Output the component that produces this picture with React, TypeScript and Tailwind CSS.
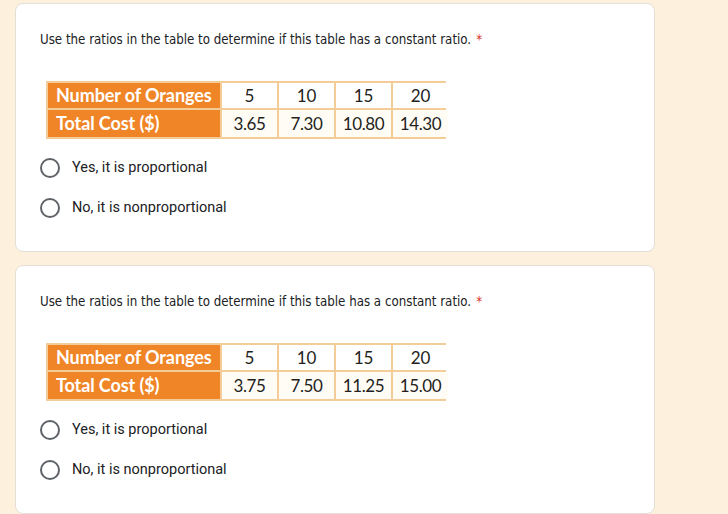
import React from "react";

type Q = { costs: string[] };

const questions: Q[] = [
  { costs: ["3.65", "7.30", "10.80", "14.30"] },
  { costs: ["3.75", "7.50", "11.25", "15.00"] },
];

const nums = ["5", "10", "15", "20"];

function RatioTable({ costs }: { costs: string[] }) {
  return (
    <div
      className="ml-[6px] w-[400px] grid grid-cols-[172px_55px_55px_55px_55px] grid-rows-[25px_27px] gap-[2px] p-[2px] bg-[#f4cc98]"
      style={{ fontFamily: "Lato, 'Open Sans', sans-serif" }}
    >
      <div className="bg-[#f08527] text-white font-bold text-[18px] leading-[25px] pl-[8px] tracking-[-0.1px]">
        Number of Oranges
      </div>
      {nums.map((n) => (
        <div key={n} className="bg-white text-[#231f20] text-[17px] leading-[25px] text-center">
          {n}
        </div>
      ))}
      <div className="bg-[#f08527] text-white font-bold text-[18px] leading-[27px] pl-[8px] tracking-[-0.1px]">
        Total Cost ($)
      </div>
      {costs.map((c) => (
        <div key={c} className="bg-[#fffcf6] text-[#231f20] text-[17px] leading-[27px] text-center tracking-[-0.4px]">
          {c}
        </div>
      ))}
    </div>
  );
}

function Option({ label }: { label: string }) {
  return (
    <div className="flex items-center h-[40px]">
      <div className="w-[20px] h-[20px] rounded-full border-2 border-[#5f6368] shrink-0" />
      <span
        className="ml-[12px] text-[14.5px] text-[#202124]"
        style={{ fontFamily: "Roboto, Arial, sans-serif" }}
      >
        {label}
      </span>
    </div>
  );
}

function Card({ q }: { q: Q }) {
  return (
    <div className="w-[640px] bg-white border border-[#e3dfd8] rounded-[8px] pl-[24px] pt-[26px] pb-[23px]">
      <div
        className="text-[13.2px] leading-[20px] text-[#202124]"
        style={{ fontFamily: "'Liberation Sans Narrow', 'DejaVu Sans Condensed', sans-serif" }}
      >
        Use the ratios in the table to determine if this table has a constant ratio.
        <span className="text-[#d93025] ml-[5px]">*</span>
      </div>
      <div className="mt-[31px]">
        <RatioTable costs={q.costs} />
      </div>
      <div className="mt-[9px]">
        <Option label="Yes, it is proportional" />
        <Option label="No, it is nonproportional" />
      </div>
    </div>
  );
}

export default function App() {
  return (
    <div className="w-[728px] h-[514px] overflow-hidden bg-[#fdf0dc] pl-[15px] pt-[3px] flex flex-col gap-[13px]">
      {questions.map((q, i) => (
        <Card key={i} q={q} />
      ))}
    </div>
  );
}
